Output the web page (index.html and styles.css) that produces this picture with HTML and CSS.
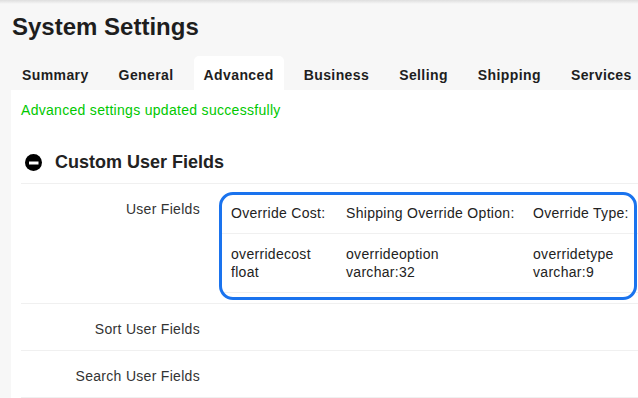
FILE: index.html
```html
<!DOCTYPE html>
<html lang="en">
<head>
  <meta charset="UTF-8" />
  <meta name="viewport" content="width=device-width, initial-scale=1.0" />
  <title>System Settings</title>
  <link rel="stylesheet" href="styles.css">
</head>
<body>
  <div class="page">
    <h1>System Settings</h1>
    <ul class="tabs">
      <li>Summary</li>
      <li>General</li>
      <li class="active">Advanced</li>
      <li>Business</li>
      <li>Selling</li>
      <li>Shipping</li>
      <li>Services</li>
    </ul>

    <div class="panel">
      <p class="notice">Advanced settings updated successfully</p>

      <h2 class="section-title">
        <svg class="toggle" width="17" height="17" viewBox="0 0 17 17">
          <circle cx="8.5" cy="8.5" r="8.5" fill="#000" />
          <rect x="4" y="7.5" width="9.5" height="3" fill="#fff" />
        </svg>
        Custom User Fields
      </h2>

      <div class="row">
        <div class="label">User Fields</div>
        <div class="value fields">
          <table class="field-table">
            <colgroup>
              <col class="c1">
              <col class="c2">
              <col>
            </colgroup>
            <thead>
              <tr>
                <th>Override Cost:</th>
                <th>Shipping Override Option:</th>
                <th>Override Type:</th>
              </tr>
            </thead>
            <tbody>
              <tr>
                <td>overridecost<br>float</td>
                <td>overrideoption<br>varchar:32</td>
                <td>overridetype<br>varchar:9</td>
              </tr>
            </tbody>
          </table>
          <div class="highlight"></div>
        </div>
      </div>

      <div class="row">
        <div class="label">Sort User Fields</div>
        <div class="value"></div>
      </div>

      <div class="row">
        <div class="label">Search User Fields</div>
        <div class="value"></div>
      </div>
    </div>
  </div>
</body>
</html>
```

FILE: styles.css
```css
* {
  margin: 0;
  padding: 0;
  box-sizing: border-box;
}

body {
  width: 100%;
  height: 100vh;
  overflow: hidden;
  background: linear-gradient(#dedede, #f7f7f7 4px);
  font-family: "Liberation Sans", Arial, sans-serif;
  font-size: 14px;
  letter-spacing: 0.3px;
  color: #222;
}

.page {
  padding-left: 11px;
  height: 100%;
  display: flex;
  flex-direction: column;
}

h1 {
  padding: 13px 0 0 1px;
  font-size: 24px;
  line-height: 28px;
  font-weight: bold;
  letter-spacing: 0;
  color: #1e1e1e;
}

.tabs {
  list-style: none;
  display: flex;
  gap: 10px;
  margin: 15px 0 0 1px;
}

.tabs li {
  padding: 9px 10px 5px;
  line-height: 20px;
  font-weight: bold;
  letter-spacing: 0.4px;
  color: #1e1e1e;
  border-radius: 5px 5px 0 0;
}

.tabs li.active {
  background-color: #fff;
}

.panel {
  flex: 1;
  background-color: #fff;
  padding: 10px 0 0 10px;
}

.notice {
  line-height: 20px;
  color: #00c800;
}

.section-title {
  display: flex;
  align-items: center;
  gap: 13px;
  margin-top: 30px;
  padding: 0 0 9px 4px;
  font-size: 18px;
  line-height: 24px;
  letter-spacing: 0;
  color: #222;
  border-bottom: 1px solid #f0f0f0;
}

.row {
  display: flex;
  gap: 21px;
  border-bottom: 1px solid #f0f0f0;
}

.label {
  width: 179px;
  flex-shrink: 0;
  padding: 15px 0 11px;
  line-height: 20px;
  text-align: right;
  color: #333;
}

.value {
  flex: 1;
}

.fields {
  position: relative;
  padding: 9px 0 10px;
}

.field-table {
  width: 100%;
  table-layout: fixed;
  border-collapse: collapse;
}

.field-table .c1 {
  width: 115px;
}

.field-table .c2 {
  width: 187px;
}

.field-table th {
  padding: 10px;
  line-height: 20px;
  font-weight: normal;
  text-align: left;
  white-space: nowrap;
  border-bottom: 1px solid #f0f0f0;
}

.field-table td {
  padding: 11px 10px;
  line-height: 18px;
  white-space: nowrap;
  border-bottom: 1px solid #f0f0f0;
}

/* annotation box drawn over the field table */
.highlight {
  position: absolute;
  top: 8px;
  left: -2px;
  right: 1px;
  bottom: 3px;
  border: 3px solid #1a73ee;
  border-radius: 14px;
  pointer-events: none;
}
```
